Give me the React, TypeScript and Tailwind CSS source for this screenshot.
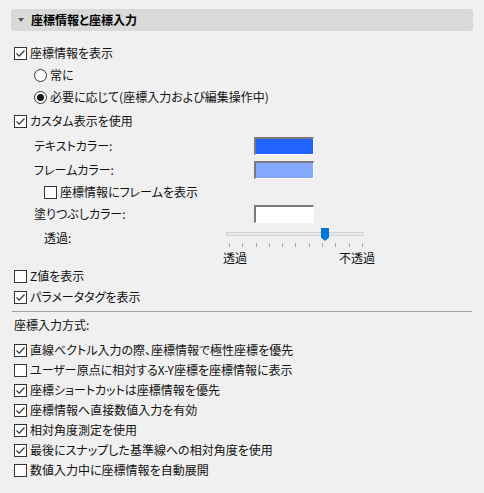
import React from "react";

const font = { fontFamily: '"Noto Sans CJK JP", "Noto Sans", sans-serif' };

function CheckBox({ checked }: { checked?: boolean }) {
  return (
    <span className="w-[13px] h-[13px] shrink-0 border border-[#333333] bg-white flex items-center justify-center">
      {checked && (
        <svg width="11" height="11" viewBox="0 0 11 11">
          <path d="M1.5 5.5 L4.2 8.2 L9.5 2.5" fill="none" stroke="#333333" strokeWidth="1.2" />
        </svg>
      )}
    </span>
  );
}

function Radio({ checked }: { checked?: boolean }) {
  return (
    <span className="w-[13px] h-[13px] shrink-0 rounded-full border border-[#333333] bg-white flex items-center justify-center">
      {checked && <span className="w-[7px] h-[7px] rounded-full bg-[#1a1a1a]" />}
    </span>
  );
}

function CheckRow({
  label,
  checked,
  indent = "pl-[14px]",
}: {
  label: string;
  checked?: boolean;
  indent?: string;
}) {
  return (
    <div className={`h-[20px] flex items-center gap-[3px] ${indent}`}>
      <CheckBox checked={checked} />
      <span>{label}</span>
    </div>
  );
}

function Swatch({ color }: { color: string }) {
  return (
    <span
      className={`w-[60px] h-[18px] border-t-2 border-l-2 border-b border-r border-t-[#7a7a7a] border-l-[#7a7a7a] border-b-white border-r-white ${color}`}
    />
  );
}

function ColorRow({ label, color }: { label: string; color: string }) {
  return (
    <div className="h-[24px] flex items-center">
      <span className="w-[254px] pl-[34px]">{label}</span>
      <Swatch color={color} />
    </div>
  );
}

const ticks = [0, 1, 2, 3, 4, 5, 6, 7, 8, 9, 10];

export default function App() {
  return (
    <div
      className="w-[484px] h-[493px] bg-[#f0f0f0] text-[12px] [font-feature-settings:'palt'] text-[#111111] overflow-hidden"
      style={font}
    >
      <div className="mx-[11px] mt-[9px] h-[22px] rounded-[3px] bg-[#d9d9d9] flex items-center">
        <svg width="6" height="4" viewBox="0 0 6 4" className="ml-[7px]">
          <path d="M0 0 H6 L3 4 Z" fill="#555555" />
        </svg>
        <span className="ml-[7px] font-bold text-black">座標情報と座標入力</span>
      </div>

      <div className="pt-[11px] flex flex-col">
        <div className="h-[22px] flex items-center gap-[3px] pl-[14px]">
          <CheckBox checked />
          <span>座標情報を表示</span>
        </div>
        <div className="h-[22px] flex items-center gap-[3px] pl-[34px]">
          <Radio />
          <span>常に</span>
        </div>
        <div className="h-[22px] flex items-center gap-[3px] pl-[34px]">
          <Radio checked />
          <span>必要に応じて(座標入力および編集操作中)</span>
        </div>
        <div className="mt-[2px] h-[22px] flex items-center gap-[3px] pl-[14px]">
          <CheckBox checked />
          <span>カスタム表示を使用</span>
        </div>

        <div className="mt-[2px]">
          <ColorRow label="テキストカラー:" color="bg-[#2262ff]" />
          <ColorRow label="フレームカラー:" color="bg-[#84aaff]" />
          <CheckRow label="座標情報にフレームを表示" indent="pl-[44px]" />
          <ColorRow label="塗りつぶしカラー:" color="bg-white" />
        </div>

        <div className="flex">
          <span className="w-[223px] pl-[44px] pt-[2px] leading-[20px]">透過:</span>
          <div className="w-[152px] pt-[6px] flex flex-col">
            <div className="relative ml-[3px] w-[138px] h-[4px] border border-[#d4d4d4] bg-[#e7e7e7]">
              <svg width="8" height="13" viewBox="0 0 8 13" className="absolute left-[94px] top-[-5px]">
                <path d="M0 0 H8 V9.5 L4 13 L0 9.5 Z" fill="#0078d7" />
              </svg>
            </div>
            <div className="mt-[7px] ml-[6px] w-[134px] h-[4px] flex justify-between">
              {ticks.map((t) => (
                <span key={t} className="w-px h-[4px] bg-[#a8a8a8]" />
              ))}
            </div>
            <div className="mt-[3px] flex justify-between leading-[16px]">
              <span>透過</span>
              <span>不透過</span>
            </div>
          </div>
        </div>

        <CheckRow label="Z値を表示" />
        <div className="mt-[1px]">
          <CheckRow label="パラメータタグを表示" checked />
        </div>

        <div className="mt-[4px] mx-[12px] h-px bg-[#a0a0a0]" />

        <div className="mt-[3px] h-[20px] flex items-center pl-[14px]">座標入力方式:</div>

        <div className="mt-[5px]">
          <CheckRow label="直線ベクトル入力の際、座標情報で極性座標を優先" checked />
          <CheckRow label="ユーザー原点に相対するX-Y座標を座標情報に表示" />
          <CheckRow label="座標ショートカットは座標情報を優先" checked />
          <CheckRow label="座標情報へ直接数値入力を有効" checked />
          <CheckRow label="相対角度測定を使用" checked />
          <CheckRow label="最後にスナップした基準線への相対角度を使用" checked />
          <CheckRow label="数値入力中に座標情報を自動展開" />
        </div>
      </div>
    </div>
  );
}
